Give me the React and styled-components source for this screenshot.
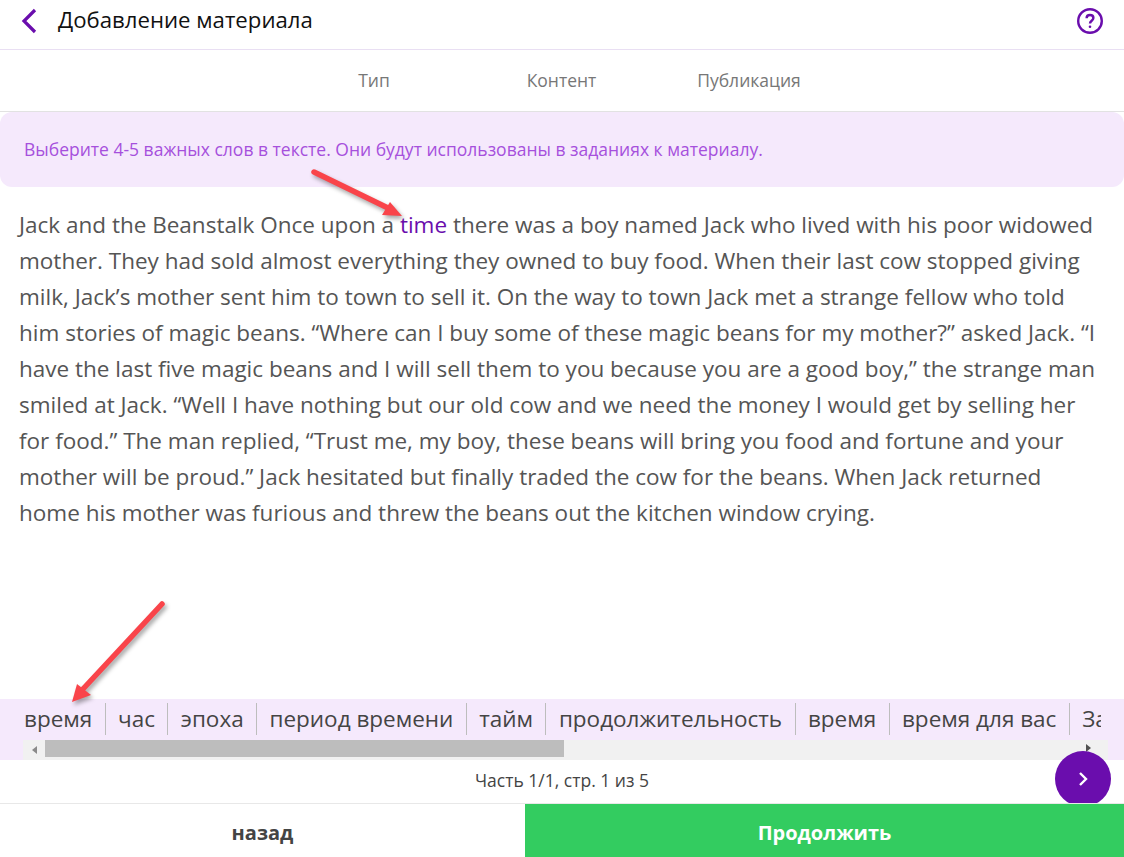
import React from "react";
import styled, { createGlobalStyle } from "styled-components";

const purple = "#6a0dad";
const lilac = "#f5e9fc";

const words = ["время", "час", "эпоха", "период времени", "тайм", "продолжительность", "время", "время для вас", "Запас"];
const tabs = ["Тип", "Контент", "Публикация"];

function App() {
  return (
    <>
      <GlobalStyle />
      <Page>
        <Header>
          <BackIcon width="18" height="28" viewBox="0 0 18 28">
            <path d="M15 3 L4 14 L15 25" />
          </BackIcon>
          <Title>Добавление материала</Title>
          <HelpIcon width="28" height="28" viewBox="0 0 28 28">
            <circle cx="14" cy="14" r="11.8" />
            <path d="M10.6 11.2c0-2 1.5-3.2 3.4-3.2s3.4 1.2 3.4 3c0 2.6-3.4 2.8-3.4 5.4" />
            <circle className="dot" cx="14" cy="19.8" r="1.3" />
          </HelpIcon>
        </Header>
        <Tabs>
          {tabs.map((tab) => (
            <Tab key={tab}>{tab}</Tab>
          ))}
        </Tabs>
        <Notice>Выберите 4-5 важных слов в тексте. Они будут использованы в заданиях к материалу.</Notice>
        <Story>
          Jack and the Beanstalk Once upon a <Picked>time</Picked> there was a boy named Jack who lived with his poor widowed
          mother. They had sold almost everything they owned to buy food. When their last cow stopped giving
          milk, Jack’s mother sent him to town to sell it. On the way to town Jack met a strange fellow who told
          him stories of magic beans. “Where can I buy some of these magic beans for my mother?” asked Jack. “I
          have the last five magic beans and I will sell them to you because you are a good boy,” the strange man
          smiled at Jack. “Well I have nothing but our old cow and we need the money I would get by selling her
          for food.” The man replied, “Trust me, my boy, these beans will bring you food and fortune and your
          mother will be proud.” Jack hesitated but finally traded the cow for the beans. When Jack returned
          home his mother was furious and threw the beans out the kitchen window crying.
        </Story>
        <Translations>
          <WordRow>
            {words.map((word, i) => (
              <Word key={i}>{word}</Word>
            ))}
          </WordRow>
          <ScrollBar>
            <ScrollButton>
              <svg width="6" height="8" viewBox="0 0 6 8"><path d="M6 0v8L1 4z" fill="#8a8a8a" /></svg>
            </ScrollButton>
            <ScrollThumb />
          </ScrollBar>
          <ScrollEnd width="6" height="8" viewBox="0 0 6 8"><path d="M0 0v8l5-4z" fill="#505050" /></ScrollEnd>
        </Translations>
        <Pager>
          Часть 1/1, стр. 1 из 5
          <NextButton>
            <svg width="14" height="18" viewBox="0 0 14 18">
              <path d="M4 3l6 6-6 6" fill="none" stroke="#fff" strokeWidth="2.4" />
            </svg>
          </NextButton>
        </Pager>
        <Footer>
          <BackButton>назад</BackButton>
          <ContinueButton>Продолжить</ContinueButton>
        </Footer>

        <Arrow $left={306} $top={164} width="104" height="60" viewBox="0 0 104 60">
          <path d="M84 38 L96 52 L76 51 Z" />
          <path className="shaft" d="M8 8 L82 44" />
        </Arrow>
        <Arrow $left={62} $top={596} width="110" height="114" viewBox="0 0 110 114">
          <path d="M15 88 L10 106 L29 99 Z" />
          <path className="shaft" d="M100 8 L21 93" />
        </Arrow>
      </Page>
    </>
  );
}

const GlobalStyle = createGlobalStyle`
  html, body {
    margin: 0;
    padding: 0;
    background: #fff;
  }
  body {
    font-family: "Open Sans", "Noto Sans", sans-serif;
  }
`;

const Page = styled.div`
  position: relative;
  display: flex;
  flex-direction: column;
  width: 1124px;
  height: 857px;
  overflow: hidden;
`;

const Header = styled.header`
  display: flex;
  align-items: center;
  height: 42px;
  padding: 0 20px 7px 20px;
  border-bottom: 1px solid #e9dff3;
`;

const BackIcon = styled.svg`
  flex: none;
  margin-right: 20px;
  path {
    fill: none;
    stroke: ${purple};
    stroke-width: 3.2;
  }
`;

const Title = styled.h1`
  flex: 1;
  margin: 0;
  padding-bottom: 2px;
  font-size: 22.2px;
  font-weight: 500;
  line-height: 30px;
  color: #111;
`;

const HelpIcon = styled.svg`
  flex: none;
  fill: none;
  stroke: ${purple};
  stroke-width: 2.4;
  .dot {
    fill: ${purple};
    stroke: none;
  }
`;

const Tabs = styled.nav`
  display: grid;
  grid-template-columns: repeat(3, 187.5px);
  justify-content: center;
  align-items: center;
  height: 61px;
  padding-right: 1px;
  border-bottom: 1px solid #e2e2e2;
`;

const Tab = styled.div`
  padding-bottom: 2px;
  text-align: center;
  font-size: 17.5px;
  color: #777;
`;

const Notice = styled.div`
  display: flex;
  align-items: center;
  height: 73px;
  padding: 0 24px 2px;
  border-radius: 12px;
  background: ${lilac};
  color: #a650dc;
  font-size: 17.5px;
`;

const Story = styled.p`
  flex: 1;
  margin: 0;
  padding: 20px 24px 0 19px;
  font-size: 22.5px;
  line-height: 36px;
  color: #555;
`;

const Picked = styled.span`
  color: ${purple};
`;

const Translations = styled.section`
  position: relative;
  height: 61px;
  background: ${lilac};
`;

const WordRow = styled.div`
  display: flex;
  height: 41px;
  padding: 4px 0 0 11px;
  box-sizing: border-box;
  width: 1101px;
  overflow: hidden;
`;

const Word = styled.span`
  flex: none;
  height: 32px;
  padding: 0 12.4px;
  font-size: 22.5px;
  line-height: 31px;
  color: #444;
  border-right: 1px solid #bdbdbd;
  &:first-child {
    padding-left: 13px;
  }
  &:last-child {
    border-right: none;
  }
`;

const ScrollBar = styled.div`
  display: flex;
  height: 20px;
  margin: 0 16px 0 23px;
  background: #f1f1f1;
`;

const ScrollButton = styled.div`
  display: flex;
  align-items: center;
  justify-content: center;
  width: 22px;
`;

const ScrollThumb = styled.div`
  width: 519px;
  height: 17px;
  background: #bdbdbd;
`;

const ScrollEnd = styled.svg`
  position: absolute;
  left: 1086px;
  top: 45px;
`;

const Pager = styled.div`
  position: relative;
  display: flex;
  align-items: center;
  justify-content: center;
  height: 43px;
  padding-bottom: 4px;
  box-sizing: border-box;
  font-size: 17.5px;
  color: #444;
`;

const NextButton = styled.div`
  position: absolute;
  left: 1055px;
  top: -9px;
  display: flex;
  align-items: center;
  justify-content: center;
  width: 56px;
  height: 56px;
  border-radius: 50%;
  background: ${purple};
`;

const Footer = styled.footer`
  position: relative;
  display: grid;
  grid-template-columns: 525px 1fr;
  height: 53px;
  border-top: 1px solid #e8e8e8;
  background: #fff;
`;

const BackButton = styled.div`
  display: flex;
  align-items: center;
  justify-content: center;
  padding-top: 3px;
  font-size: 20px;
  font-weight: 700;
  color: #444;
`;

const ContinueButton = styled(BackButton)`
  background: #33cc60;
  color: #fff;
`;

const Arrow = styled.svg`
  position: absolute;
  left: ${(p) => p.$left}px;
  top: ${(p) => p.$top}px;
  filter: drop-shadow(2px 3px 2px rgba(0, 0, 0, 0.35));
  path {
    fill: #f9444a;
  }
  .shaft {
    fill: none;
    stroke: #f9444a;
    stroke-width: 5.5;
    stroke-linecap: round;
  }
`;

export default App;
